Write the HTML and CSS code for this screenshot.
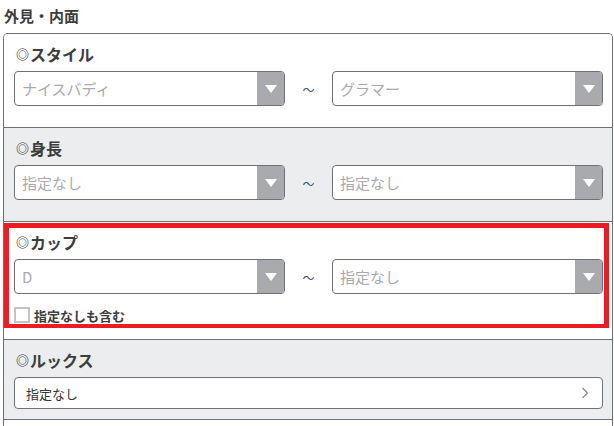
FILE: index.html
```html
<!DOCTYPE html>
<html lang="ja">
<head>
<meta charset="utf-8">
<title>外見・内面</title>
<link rel="stylesheet" href="styles.css">
</head>
<body>
<h2 class="heading">外見・内面</h2>
<div class="panel">
  <div class="sec">
    <div class="sec-title"><span class="mark">◎</span>スタイル</div>
    <div class="range">
      <div class="select"><span class="val">ナイスバディ</span><span class="arrow"></span></div>
      <span class="tilde">～</span>
      <div class="select"><span class="val">グラマー</span><span class="arrow"></span></div>
    </div>
  </div>
  <div class="sec gray">
    <div class="sec-title"><span class="mark">◎</span>身長</div>
    <div class="range">
      <div class="select"><span class="val">指定なし</span><span class="arrow"></span></div>
      <span class="tilde">～</span>
      <div class="select"><span class="val">指定なし</span><span class="arrow"></span></div>
    </div>
  </div>
  <div class="sec hl-sec">
    <div class="highlight">
      <div class="sec-title"><span class="mark">◎</span>カップ</div>
      <div class="range">
        <div class="select"><span class="val">D</span><span class="arrow"></span></div>
        <span class="tilde">～</span>
        <div class="select"><span class="val">指定なし</span><span class="arrow"></span></div>
      </div>
      <label class="check"><span class="box"></span>指定なしも含む</label>
    </div>
  </div>
  <div class="sec gray short">
    <div class="sec-title"><span class="mark">◎</span>ルックス</div>
    <div class="link">
      <span>指定なし</span>
      <svg class="chev" width="8" height="12" viewBox="0 0 8 12"><polyline points="1.5,1 6.5,6 1.5,11" fill="none" stroke="#8a8c90" stroke-width="1.3"/></svg>
    </div>
  </div>
  <div class="sec"></div>
</div>
</body>
</html>
```
FILE: styles.css
```css
html, body {
  margin: 0;
  padding: 0;
  background: #fff;
}
body {
  padding: 0 1px 0 3px;
  font-family: "Noto Sans CJK JP", "Noto Sans", sans-serif;
  color: #3d3d3d;
  overflow: hidden;
}
.heading {
  margin: 0;
  padding: 6px 0 7px 1px;
  font-size: 15px;
  line-height: 20px;
  font-weight: 700;
  color: #3d3d3d;
}
.panel {
  border: 1px solid #6d7078;
  border-bottom: none;
  border-radius: 5px 5px 0 0;
  height: 400px;
  overflow: hidden;
}
.sec {
  padding: 8px 9px 21px 10px;
  border-top: 1px solid #6d7078;
  background: #fff;
}
.sec:first-child {
  border-top: none;
}
.sec.gray {
  background: #ecedef;
}
.sec.short {
  padding-bottom: 10px;
}
.sec-title {
  font-size: 16px;
  line-height: 24px;
  font-weight: 700;
  color: #3d3d3d;
  margin-bottom: 5px;
  display: flex;
  align-items: center;
}
.mark {
  font-size: 13px;
  font-weight: 700;
  margin: 0 1px 0 2px;
  color: #3d3d3d;
}
.range {
  display: flex;
  align-items: center;
}
.select {
  flex: 1;
  height: 33px;
  border: 1px solid #6d7078;
  border-radius: 4px;
  background: #fff;
  display: flex;
  align-items: center;
  overflow: hidden;
}
.val {
  flex: 1;
  padding-left: 7px;
  font-size: 15px;
  color: #a9a9ab;
}
.arrow {
  width: 27px;
  height: 100%;
  background: #a9aaae;
  display: flex;
  align-items: center;
  justify-content: center;
}
.arrow::after {
  content: "";
  width: 0;
  height: 0;
  border-left: 6.5px solid transparent;
  border-right: 6.5px solid transparent;
  border-top: 8px solid #fff;
}
.tilde {
  width: 47px;
  text-align: center;
  font-size: 12px;
  color: #3b5170;
  padding-top: 1px;
}
.hl-sec {
  padding: 1px 0 11px 0;
}
.highlight {
  margin-right: 3px;
  border-style: solid;
  border-color: #ec1c24;
  border-width: 5px 5px 4px 5px;
  padding: 2px 1px 0 5px;
}
.check {
  display: flex;
  align-items: center;
  height: 18px;
  margin-top: 12px;
  font-size: 13px;
  font-weight: 700;
  color: #3d3d3d;
}
.box {
  width: 12px;
  height: 12px;
  border: 2px solid #c3c4c8;
  background: #fff;
  margin-right: 4px;
}
.link {
  height: 30px;
  border: 1px solid #6d7078;
  border-radius: 4px;
  background: #fff;
  display: flex;
  align-items: center;
  justify-content: space-between;
  padding: 0 13px 0 11px;
  font-size: 13px;
  color: #333;
}
.chev {
  display: block;
}
```
